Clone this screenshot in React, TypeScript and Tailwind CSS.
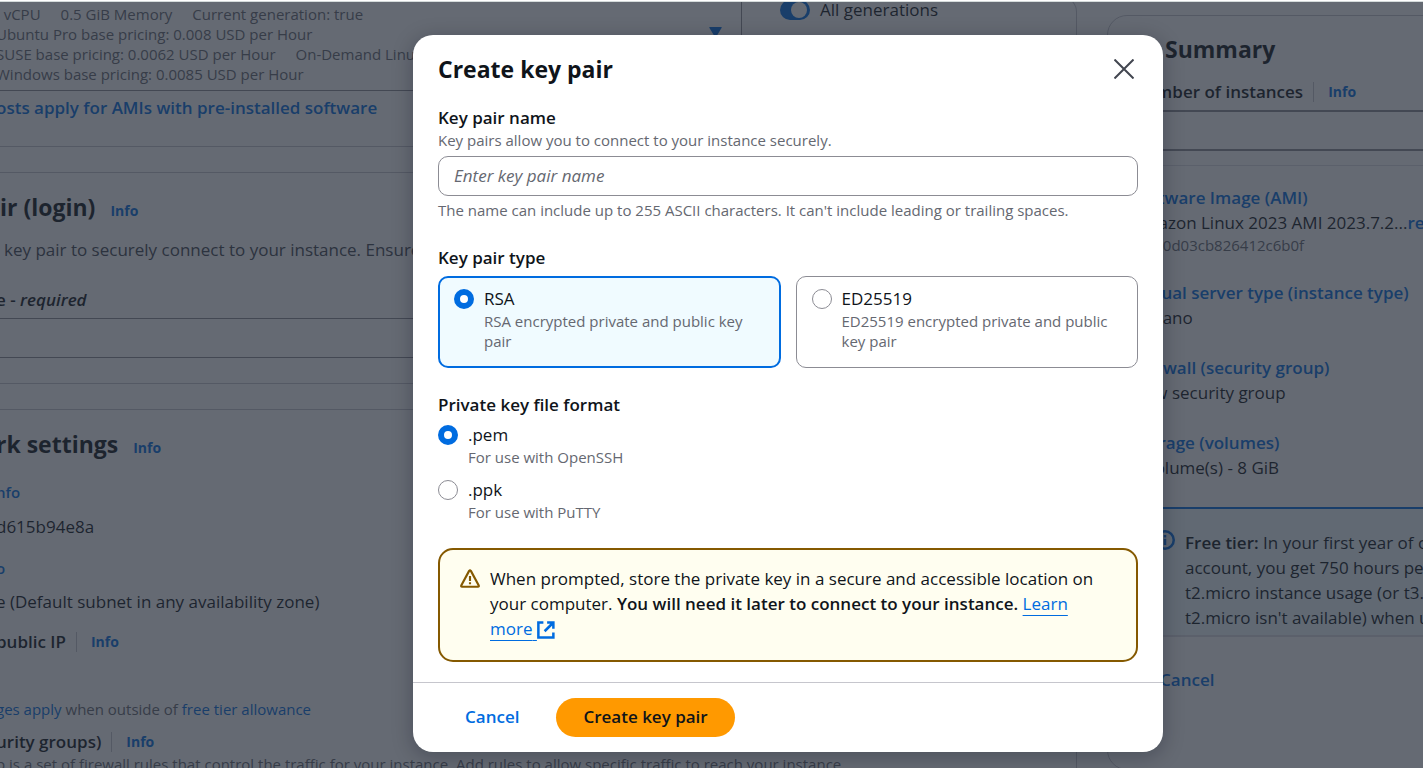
import { useState } from "react";

function Info() {
  return (
    <a href="#info" className="text-[14px] leading-5 font-bold text-[#006ce0]">
      Info
    </a>
  );
}

function Separator() {
  return <span className="mr-1 h-5 w-px shrink-0 bg-[#c6c6cd]" />;
}

function ConfigurationColumn() {
  return (
    <main className="-ml-1 w-[1081px] min-w-0 shrink-0 whitespace-nowrap">
      <section className="flex h-[151px] items-start rounded-r-2xl border border-l-0 border-[#c6c6cd]">
        <div className="w-[746px]">
          <button
            type="button"
            className="flex w-full items-start justify-between border-r border-b border-[#8c8c94] pt-[7px] pr-[19px] pb-[6px] text-left text-[15px] leading-5 text-[#656871]"
          >
            <span className="flex flex-col">
              <span className="flex gap-5">
                <span>l vCPU</span>
                <span>0.5 GiB Memory</span>
                <span>Current generation: true</span>
              </span>
              <span>Ubuntu Pro base pricing: 0.008 USD per Hour</span>
              <span className="flex gap-5">
                <span>SUSE base pricing: 0.0062 USD per Hour</span>
                <span>On-Demand Linux base pricing: 0.0058 USD per Hour</span>
              </span>
              <span>Windows base pricing: 0.0085 USD per Hour</span>
            </span>
            <svg viewBox="0 0 13 11" className="mt-[23px] h-[11px] w-[13px] fill-[#006ce0]" aria-hidden="true">
              <path d="M0.5 0h12q.5.5 0 1L6.5 11 0.5 1q-.5-.5 0-1z" />
            </svg>
          </button>
          <a href="#costs" className="mt-1 block text-[17px] leading-[25px] font-semibold text-[#006ce0]">
            osts apply for AMIs with pre-installed software
          </a>
        </div>
        <div className="ml-[38px] flex h-[25px] items-center gap-[10px] text-[17px]">
          <button
            type="button"
            role="switch"
            aria-checked="true"
            aria-labelledby="generations"
            className="flex h-5 w-[30px] items-center justify-end rounded-full bg-[#006ce0] pr-[3px]"
          >
            <span className="size-4 rounded-full bg-white" />
          </button>
          <span id="generations">All generations</span>
        </div>
      </section>

      <section className="mt-[25px] rounded-r-2xl border border-l-0 border-[#c6c6cd] pt-[19px] pb-[25px]">
        <div className="flex items-baseline gap-[15px] pl-1">
          <h2 className="text-[23px] leading-[30px] font-bold">ir (login)</h2>
          <Info />
        </div>
        <p className="mt-[15px] pl-2 text-[17px] leading-[25px] text-[#424650]">
          key pair to securely connect to your instance. Ensure that you have access to the selected key pair
        </p>
        <label htmlFor="pair" className="mt-[25px] block text-[17px] leading-[25px] font-semibold">
          e - <i>required</i>
        </label>
        <input id="pair" className="mt-[6px] block h-10 w-[650px] border-y border-[#8c8c94]" />
      </section>

      <section className="mt-[25px] h-[400px] rounded-r-2xl border border-l-0 border-[#c6c6cd] pt-[19px]">
        <div className="flex items-baseline gap-[15px]">
          <h2 className="text-[23px] leading-[30px] font-bold">rk settings</h2>
          <Info />
        </div>
        <a href="#network" className="mt-[23px] block text-[15px] leading-5 font-semibold text-[#006ce0]">
          nfo
        </a>
        <p className="mt-3 text-[17px] leading-[25px]">d615b94e8a</p>
        <a href="#subnet" className="mt-[19px] block text-[15px] leading-5 font-semibold text-[#006ce0]">
          o
        </a>
        <p className="mt-[11px] text-[17px] leading-[25px]">e (Default subnet in any availability zone)</p>
        <div className="mt-[15px] flex items-center gap-[10px] text-[17px] leading-[25px]">
          <b className="font-semibold">public IP</b>
          <Separator />
          <Info />
        </div>
        <p className="mt-[45px] text-[15px] leading-5 text-[#656871]">
          <a href="#charges" className="text-[#006ce0]">ges apply</a> when outside of{" "}
          <a href="#allowance" className="text-[#006ce0]">free tier allowance</a>
        </p>
        <div className="mt-[10px] flex items-center gap-[10px] text-[17px] leading-[25px]">
          <b className="font-semibold">urity groups)</b>
          <Separator />
          <Info />
        </div>
        <p className="text-[15px] leading-5 text-[#656871]">
          p is a set of firewall rules that control the traffic for your instance. Add rules to allow specific traffic to reach your instance.
        </p>
      </section>
    </main>
  );
}

function SummaryPanel() {
  return (
    <aside className="mt-[19px] ml-[30px] w-[380px] shrink-0 self-start rounded-[20px] border border-[#c6c6cd] pt-[18px] pb-[77px] text-[17px] leading-[25px] whitespace-nowrap">
      <div className="px-6">
        <h2 className="flex items-center gap-4 text-[23px] leading-[30px] font-bold">
          <svg viewBox="0 0 12 10" className="w-[17px] fill-[#424650]" aria-hidden="true">
            <path d="M0 0h12L6 10z" />
          </svg>
          Summary
        </h2>
        <div className="mt-[15px] flex items-center gap-[10px]">
          <label htmlFor="count" className="font-semibold">Number of instances</label>
          <Separator />
          <Info />
        </div>
        <input id="count" className="mt-[6px] block h-[41px] w-full rounded-[10px] border-2 border-[#8c8c94] px-4" />
      </div>
      <div className="mt-[14px] border-t border-[#dedee3] px-6 pt-[19px]">
        <a href="#ami" className="block font-semibold text-[#006ce0]">Software Image (AMI)</a>
        <p>
          Amazon Linux 2023 AMI 2023.7.2...<a href="#more" className="font-semibold text-[#006ce0]">read more</a>
        </p>
        <p className="text-[15px] leading-5 text-[#656871]">ami-0d03cb826412c6b0f</p>
        <a href="#type" className="mt-[25px] block font-semibold text-[#006ce0]">Virtual server type (instance type)</a>
        <p>t2.nano</p>
        <a href="#firewall" className="mt-[25px] block font-semibold text-[#006ce0]">Firewall (security group)</a>
        <p>New security group</p>
        <a href="#storage" className="mt-[25px] block font-semibold text-[#006ce0]">Storage (volumes)</a>
        <p>1 volume(s) - 8 GiB</p>
        <div className="mt-[27px] flex gap-[10px] border-t-2 border-[#006ce0] bg-[#f0fbff] pt-[21px] pb-[5px] pl-[23px]">
          <svg viewBox="0 0 16 16" className="size-5 shrink-0 fill-none stroke-[#006ce0] stroke-2" aria-hidden="true">
            <circle cx="8" cy="8" r="7" />
            <path d="M8 7v5M8 4v2" />
          </svg>
          <p>
            <b className="font-semibold">Free tier:</b> In your first year of opening an AWS
            <br />
            account, you get 750 hours per month of
            <br />
            t2.micro instance usage (or t3.micro where
            <br />
            t2.micro isn't available) when used with free
          </p>
        </div>
      </div>
      <div className="border-t-2 border-[#dedee3] px-[52px] pt-[30px]">
        <button type="button" className="font-semibold text-[#006ce0]">Cancel</button>
      </div>
    </aside>
  );
}

type ChoiceProps = {
  name: string;
  value: string;
  label: string;
  description: string;
  checked: boolean;
  onSelect: (value: string) => void;
  tile?: boolean;
};

function Choice({ name, value, label, description, checked, onSelect, tile }: ChoiceProps) {
  const frame = !tile
    ? ""
    : checked
      ? "flex-1 rounded-[10px] border-2 border-[#006ce0] bg-[#f0fbff] px-[14px] pt-[8px] pb-[15px]"
      : "flex-1 rounded-[10px] border border-[#8c8c94] px-[15px] pt-[9px] pb-[16px]";
  return (
    <label className={`flex gap-[10px] ${frame}`}>
      <input
        type="radio"
        name={name}
        value={value}
        checked={checked}
        onChange={() => onSelect(value)}
        className="mt-[3px] size-5 shrink-0 appearance-none rounded-full border border-[#8c8c94] bg-white checked:border-[6px] checked:border-[#006ce0]"
      />
      <span>
        <span className="block text-[17px] leading-[25px]">{label}</span>
        <span className="block text-[15px] leading-5 text-[#656871]">{description}</span>
      </span>
    </label>
  );
}

function CreateKeyPairDialog() {
  const [type, setType] = useState("rsa");
  const [format, setFormat] = useState("pem");
  return (
    <div
      role="dialog"
      aria-modal="true"
      aria-labelledby="dialog-title"
      className="w-[750px] rounded-[20px] bg-white shadow-[0_4px_20px_1px_rgba(0,7,22,0.25)]"
    >
      <div className="px-[25px] pt-[19px] pb-5">
        <header className="flex items-center justify-between pr-1">
          <h1 id="dialog-title" className="text-[23px] leading-[30px] font-bold">Create key pair</h1>
          <button type="button" aria-label="Close">
            <svg viewBox="0 0 20 20" className="size-5 stroke-[#424650] stroke-2" aria-hidden="true">
              <path d="M0.5 0.5l19 19M19.5 0.5l-19 19" />
            </svg>
          </button>
        </header>

        <label htmlFor="name" className="mt-[21px] block text-[17px] leading-[25px] font-semibold">Key pair name</label>
        <p className="text-[15px] leading-5 text-[#656871]">Key pairs allow you to connect to your instance securely.</p>
        <input
          id="name"
          placeholder="Enter key pair name"
          className="mt-[6px] block h-10 w-full rounded-[10px] border border-[#8c8c94] px-[15px] pb-0.5 text-[17px] placeholder:text-[#656871] placeholder:italic"
        />
        <p className="mt-1 text-[15px] leading-5 text-[#656871]">
          The name can include up to 255 ASCII characters. It can't include leading or trailing spaces.
        </p>

        <fieldset className="mt-[25px]">
          <legend className="text-[17px] leading-[25px] font-semibold">Key pair type</legend>
          <div className="mt-[6px] flex gap-[15px]">
            <Choice tile name="type" value="rsa" label="RSA" description="RSA encrypted private and public key pair" checked={type === "rsa"} onSelect={setType} />
            <Choice tile name="type" value="ed25519" label="ED25519" description="ED25519 encrypted private and public key pair" checked={type === "ed25519"} onSelect={setType} />
          </div>
        </fieldset>

        <fieldset className="mt-6">
          <legend className="text-[17px] leading-[25px] font-semibold">Private key file format</legend>
          <div className="mt-[5px] flex flex-col gap-[10px]">
            <Choice name="format" value="pem" label=".pem" description="For use with OpenSSH" checked={format === "pem"} onSelect={setFormat} />
            <Choice name="format" value="ppk" label=".ppk" description="For use with PuTTY" checked={format === "ppk"} onSelect={setFormat} />
          </div>
        </fieldset>

        <div className="mt-[26px] flex gap-[10px] rounded-[15px] border-2 border-[#855900] bg-[#fffef0] px-5 pt-4 pb-[19px]">
          <svg viewBox="0 0 16 16" className="mt-[3px] size-5 shrink-0 fill-none stroke-[#855900] stroke-[1.7]" strokeLinejoin="round" aria-hidden="true">
            <path d="M7.3 1.5Q8 .7 8.7 1.5L15 13.2Q15.3 14.2 14.4 14.2H1.6Q.7 14.2 1 13.2z" />
            <path d="M8 5.5v4M8 10.5v1.7" />
          </svg>
          <p className="text-[17px] leading-[25px]">
            When prompted, store the private key in a secure and accessible location on your computer.{" "}
            <b className="font-semibold">You will need it later to connect to your instance.</b>{" "}
            <a href="#learn" className="text-[#006ce0] underline decoration-1 underline-offset-[5px]">
              Learn{" "}
              <span className="whitespace-nowrap">
                more{" "}
                <svg viewBox="1 0 15 16" className="inline h-5 w-[19px] fill-none stroke-[#006ce0] stroke-2" aria-hidden="true">
                  <path d="M6 2H2v12h12v-4M9 2h5v5M7 9l7-7" />
                </svg>
              </span>
            </a>
          </p>
        </div>
      </div>

      <footer className="flex gap-[10px] border-t border-[#c6c6cd] px-[25px] py-[15px] text-[17px] font-semibold">
        <button type="button" className="h-[39px] rounded-full px-[27px] pb-0.5 text-[#006ce0]">Cancel</button>
        <button type="button" className="h-[39px] rounded-full bg-[#ff9900] px-[27px] pb-0.5">Create key pair</button>
      </footer>
    </div>
  );
}

export default function App() {
  return (
    <div className="relative flex h-screen flex-col overflow-hidden bg-white font-['Open_Sans','Noto_Sans',sans-serif] text-[#0f141a]">
      <div className="h-0.5 shrink-0 border-b border-[#d5dbdb]" />
      <div className="min-h-0 flex-1 overflow-hidden" aria-hidden="true">
        <div className="-mt-[6px] flex">
          <ConfigurationColumn />
          <SummaryPanel />
        </div>
      </div>
      <div className="absolute inset-x-0 top-[2px] bottom-0 flex items-start justify-center bg-[#232b37]/70 pt-[33px] pl-[153px]">
        <CreateKeyPairDialog />
      </div>
    </div>
  );
}
